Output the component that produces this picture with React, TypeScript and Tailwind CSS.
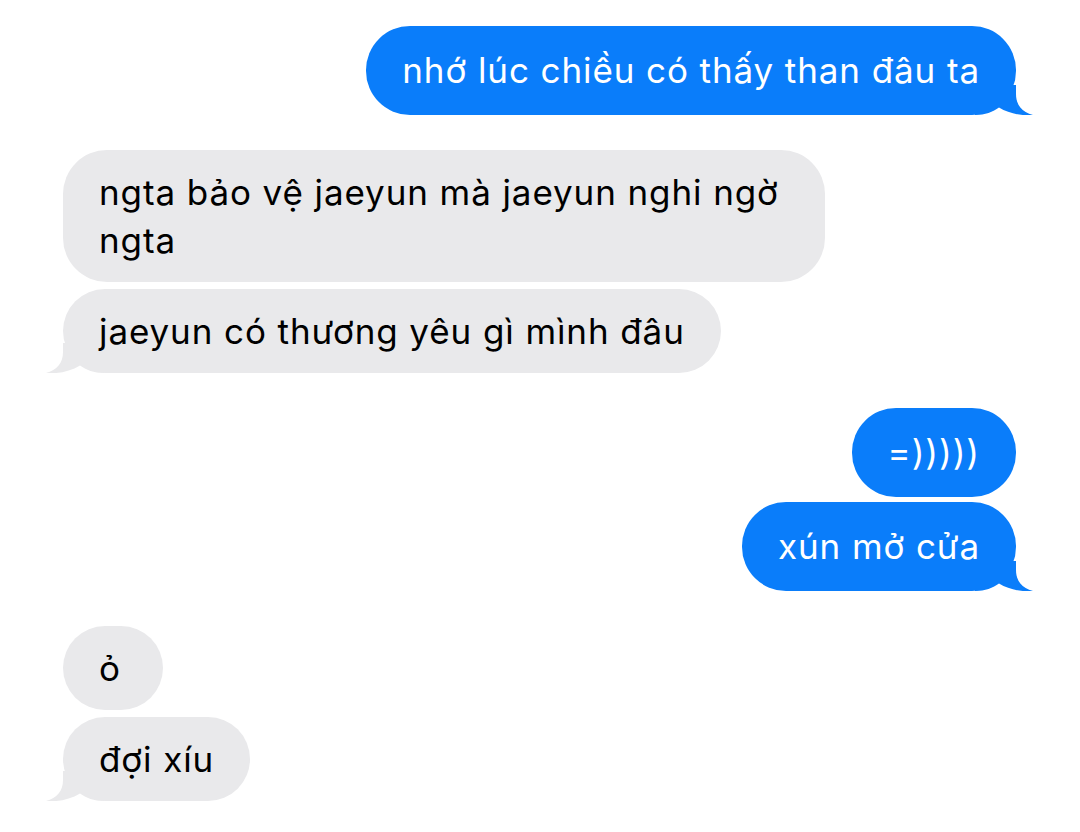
import React from "react";

type Msg = { text: string; tail?: boolean };
type Group = { from: "me" | "them"; msgs: Msg[] };

const GROUPS: Group[] = [
  { from: "me", msgs: [{ text: "nhớ lúc chiều có thấy than đâu ta", tail: true }] },
  {
    from: "them",
    msgs: [
      { text: "ngta bảo vệ jaeyun mà jaeyun nghi ngờ ngta" },
      { text: "jaeyun có thương yêu gì mình đâu", tail: true },
    ],
  },
  {
    from: "me",
    msgs: [{ text: "=)))))" }, { text: "xún mở cửa", tail: true }],
  },
  {
    from: "them",
    msgs: [{ text: "ỏ" }, { text: "đợi xíu", tail: true }],
  },
];

// tail sits on the bottom corner, box reaches 41px into the bubble and 19px out
function Tail({ side, color }: { side: "left" | "right"; color: string }) {
  return (
    <svg
      width="60"
      height="30"
      viewBox="0 0 60 30"
      className={`absolute bottom-0 ${
        side === "right" ? "-right-[19px]" : "-left-[19px] -scale-x-100"
      }`}
    >
      <path
        d="M0 30 C10 30 18 27 24 22.5 C34 28.5 46 31 58 30 C47 27 41 20 41 9 V0 H0 Z"
        fill={color}
      />
    </svg>
  );
}

function Bubble({ msg, mine }: { msg: Msg; mine: boolean }) {
  const color = mine ? "#0a7dfa" : "#e9e9eb";
  return (
    <div
      className={`relative min-w-[100px] max-w-[762px] rounded-[44px] px-[36px] text-[35px] tracking-[0.9px] ${
        mine
          ? "bg-[#0a7dfa] py-[22px] leading-[45px] text-white"
          : "bg-[#e9e9eb] py-[18px] leading-[48px] text-black"
      }`}
    >
      <span className="relative z-10">{msg.text}</span>
      {msg.tail && <Tail side={mine ? "right" : "left"} color={color} />}
    </div>
  );
}

export default function App() {
  return (
    <div
      className="flex h-[832px] w-[1080px] flex-col gap-[35px] bg-white pl-[63px] pr-[64px] pt-[26px]"
      style={{ fontFamily: "Inter, 'Noto Sans', sans-serif" }}
    >
      {GROUPS.map((g, i) => (
        <div
          key={i}
          className={`flex flex-col ${
            g.from === "me" ? "items-end gap-[5px]" : "items-start gap-[7px]"
          }`}
        >
          {g.msgs.map((m, j) => (
            <Bubble key={j} msg={m} mine={g.from === "me"} />
          ))}
        </div>
      ))}
    </div>
  );
}
